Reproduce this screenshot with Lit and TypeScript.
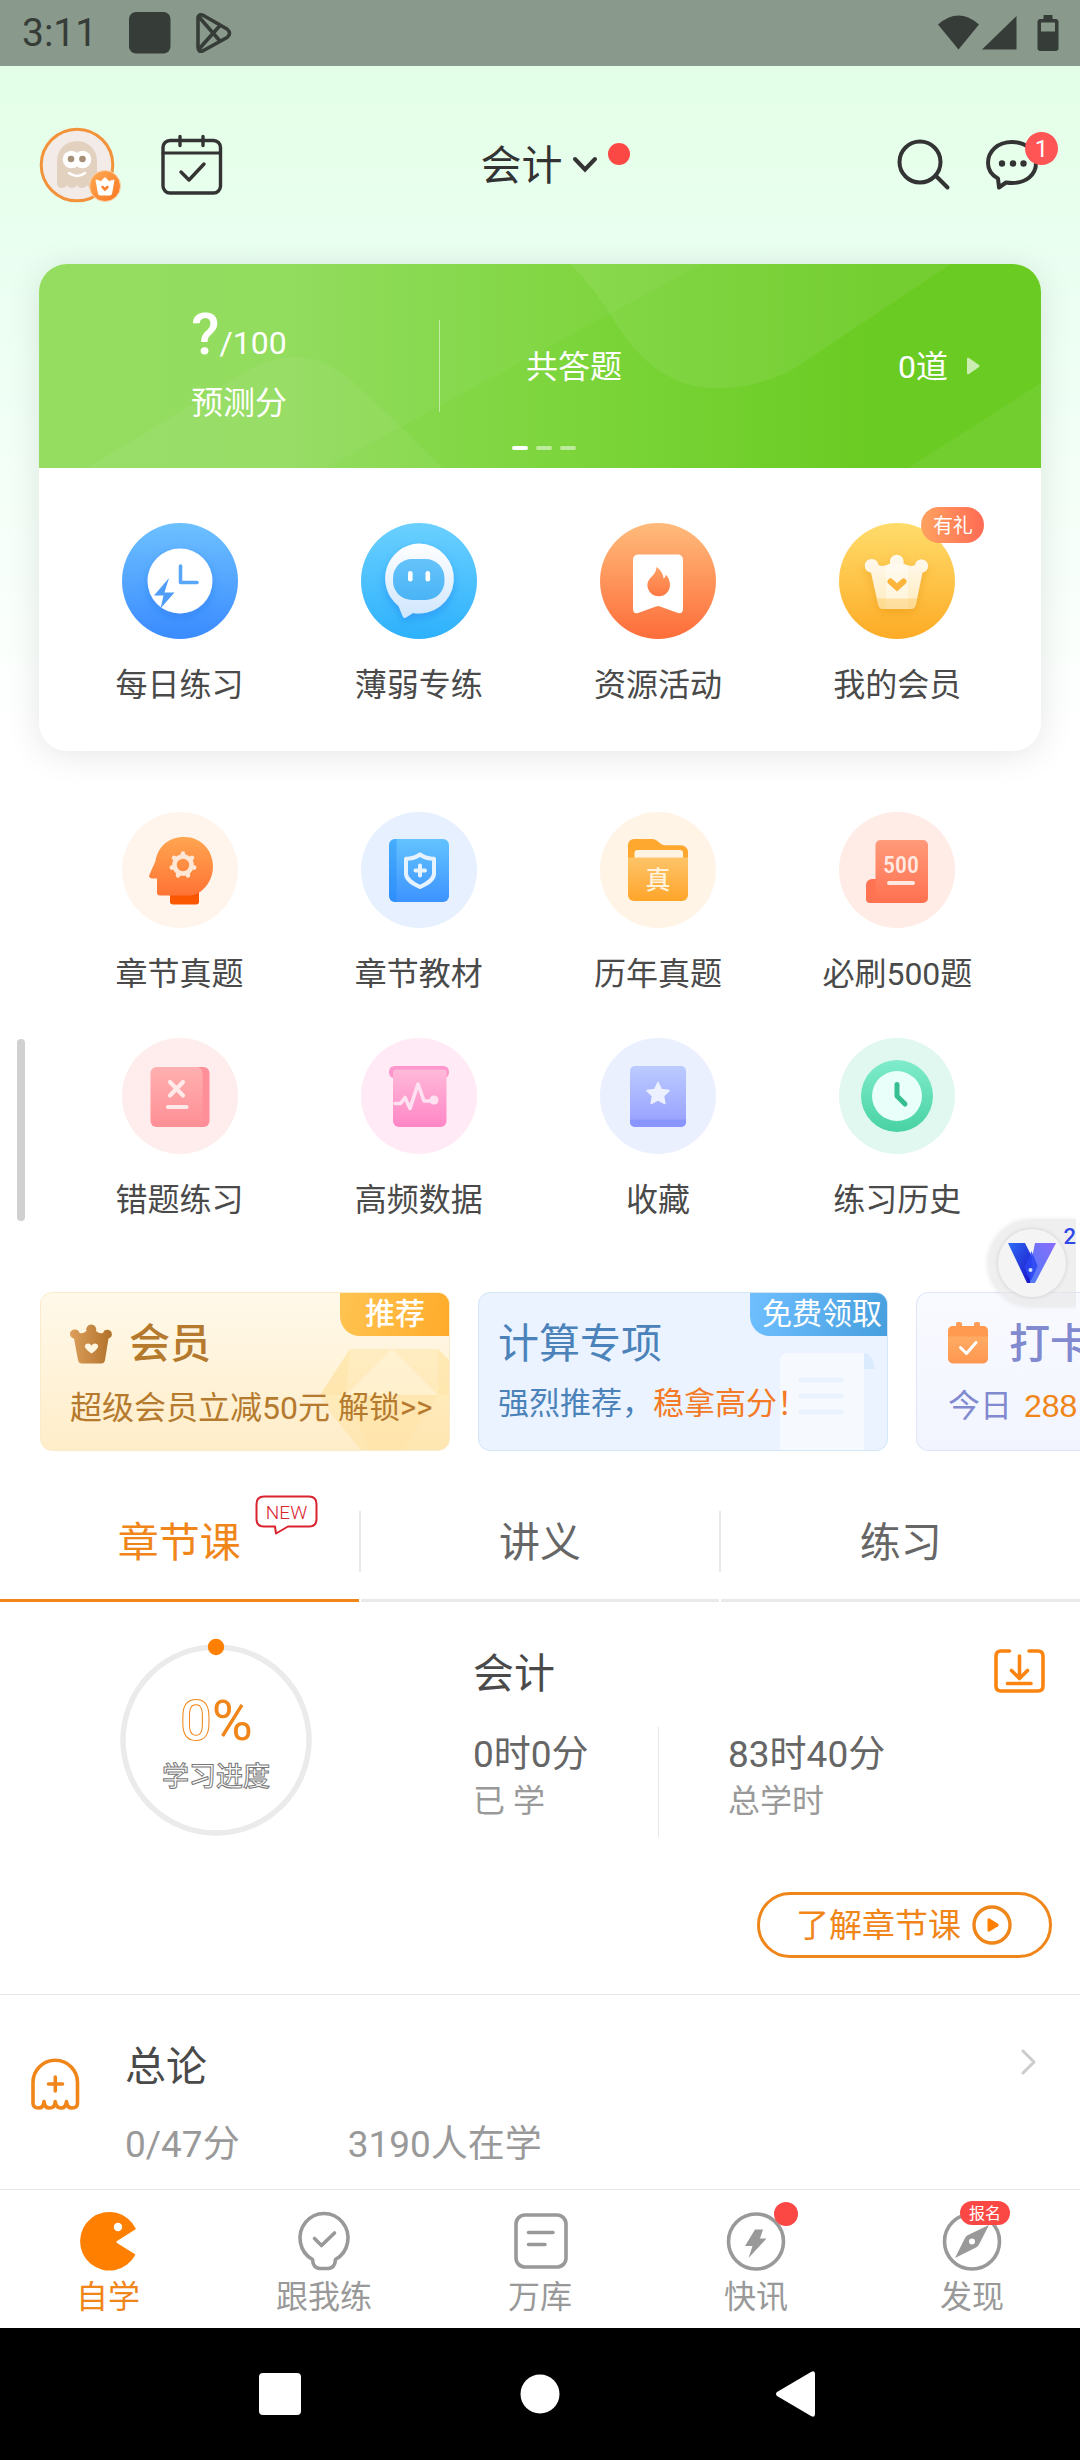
import { LitElement, html, svg, css, TemplateResult } from "lit";
import { customElement } from "lit/decorators.js";

interface Shortcut {
  label: string;
  icon: TemplateResult;
  badge?: string;
}

/* ---------- Featured icons, 116 x 116 ---------- */

const grad = (id: string, from: string, to: string) => svg`
  <linearGradient id=${id} x1="0" y1="0" x2="0" y2="1">
    <stop offset="0" stop-color=${from} /><stop offset="1" stop-color=${to} />
  </linearGradient>`;

const icon = (body: unknown) =>
  html`<svg class="shortcut-icon" viewBox="0 0 116 116" aria-hidden="true">${body}</svg>`;

const dailyIcon = icon(svg`
  <defs>${grad("daily", "#6dc0ff", "#3a8bff")}
    <filter id="soft" x="-30%" y="-30%" width="160%" height="160%">
      <feDropShadow dx="0" dy="4" stdDeviation="4" flood-color="#1a6ce8" flood-opacity=".35" />
    </filter></defs>
  <circle cx="58" cy="58" r="58" fill="url(#daily)" />
  <circle cx="58" cy="58" r="32.500" fill="#fff" filter="url(#soft)" />
  <path d="M58.500 43v16.500H75" fill="none" stroke="#58a6f8" stroke-width="3.600" stroke-linecap="round" stroke-linejoin="round" />
  <path d="M47 55 32 72.500h9.500L38.500 85.500 52.500 69.500H42.500z" fill="#4f9df9" />`);

const weakIcon = icon(svg`
  <defs>${grad("weak", "#6bd0ff", "#2db1fc")}${grad("weakBubble", "#ffffff", "#cfe6fd")}${grad("weakFace", "#66c3fa", "#4ab4f6")}</defs>
  <circle cx="58" cy="58" r="58" fill="url(#weak)" />
  <g filter="url(#soft)">
    <path d="M58 20.500a35 35 0 1 1-6 69.500l-7 4.600q-2.500 1-3.400-1.600L37.500 83A35 35 0 0 1 58 20.500z" fill="url(#weakBubble)" />
  </g>
  <rect x="32" y="36" width="51.500" height="41" rx="19" fill="url(#weakFace)" />
  <rect x="47" y="48" width="4.600" height="10.500" rx="2.300" fill="#fff" />
  <rect x="64.500" y="48" width="4.600" height="10.500" rx="2.300" fill="#fff" />`);

const resourceIcon = icon(svg`
  <defs>${grad("res", "#ffbb7b", "#fd6d3a")}${grad("flame", "#ffa066", "#fd7843")}</defs>
  <circle cx="58" cy="58" r="58" fill="url(#res)" />
  <path d="M38 31.500h40a5 5 0 0 1 5 5V86q0 5-5 4L60 83.500q-2-.8-4 0L38 90q-5 1-5-4V36.500a5 5 0 0 1 5-5z" fill="#fff" />
  <path d="M56.500 44c4.500 3 7 7.500 7 11.500 1.200-.6 2-2 2.300-3.800C69 55 70 58.500 70 62a11.300 11.300 0 0 1-22.600 0c0-8 8.600-8.500 9.100-18z" fill="url(#flame)" />`);

const memberIcon = icon(svg`
  <defs>${grad("mem", "#ffdc6b", "#fdab25")}${grad("crown", "#fffaf0", "#ffebbd")}</defs>
  <circle cx="58" cy="58" r="58" fill="url(#mem)" />
  <g filter="url(#gold)">
    <path d="M33 36a6.600 6.600 0 0 1 6.500 6q5 2.500 11.500-1.500a7 7 0 1 1 13.500 0Q71 44.500 76 42a6.600 6.600 0 1 1 7.500 7.500L77 81q-1 5-5 5H44q-4 0-5-5L32 49.500A6.600 6.600 0 0 1 33 36z" fill="url(#crown)" />
  </g>
  <rect x="47" y="42" width="22" height="44" fill="#fff" opacity=".4" />
  <path d="M37.500 75.500h41L77 81q-1 5-5 5H44q-4 0-5-5z" fill="#fdc75c" opacity=".45" />
  <path d="m51.500 58.500 6.500 6 6.500-6" fill="none" stroke="#fcb53a" stroke-width="6" stroke-linecap="round" stroke-linejoin="miter" />
  <filter id="gold" x="-30%" y="-30%" width="160%" height="160%">
    <feDropShadow dx="0" dy="4" stdDeviation="4" flood-color="#e08a00" flood-opacity=".35" />
  </filter>`);

/* ---------- Soft disc icons, 116 x 116 ---------- */

const headIcon = icon(svg`
  <defs>${grad("head", "#ffa550", "#ff7334")}</defs>
  <circle cx="58" cy="58" r="58" fill="#fff5ed" />
  <rect x="48" y="74" width="29" height="18.500" rx="3" fill="#fb5600" />
  <path d="M62 25c17 0 29 13 29 29.500 0 11-5.500 20-13 25.500-4 3-9 3.500-15 3.500H38q-3 0-3-3V66.500h-5q-4-.5-2.500-4L33.500 49C36 35 46 25 62 25z" fill="url(#head)" />
  <circle cx="61" cy="53" r="8.500" fill="none" stroke="#ffe7d6" stroke-width="4.600" />
  <g stroke="#ffe7d6" stroke-width="4.600" stroke-linecap="round">
    ${[0, 51.4, 102.9, 154.3, 205.7, 257.1, 308.6].map(
      (a) => svg`<path d="M61 42.500v-1" transform="rotate(${a} 61 53)" />`)}
  </g>`);

const textbookIcon = icon(svg`
  <defs>${grad("book", "#62c3ff", "#3d93ff")}</defs>
  <circle cx="58" cy="58" r="58" fill="#e6f0ff" />
  <rect x="28" y="27" width="60" height="63" rx="6" fill="url(#book)" />
  <path d="M35.500 27H34a6 6 0 0 0-6 6v51a6 6 0 0 0 6 6h1.500z" fill="#1585f5" opacity=".35" />
  <path d="M59 42.500c4 2.800 8.500 4.200 14 4.300V61.500c0 6-5.500 9.500-14 13.500-8.500-4-14-7.500-14-13.500V46.800c5.500-.1 10-1.500 14-4.300z" fill="none" stroke="#e6f3ff" stroke-width="4" stroke-linejoin="round" />
  <path d="M59 53.500v10M54.500 58.500h9.500" stroke="#e6f3ff" stroke-width="4" stroke-linecap="round" />`);

const pastIcon = icon(svg`
  <defs>${grad("folder", "#fdc469", "#ffa52a")}</defs>
  <circle cx="58" cy="58" r="58" fill="#fff4e6" />
  <path d="M34 27h18q3 0 5 1.700l4.500 3.600q1.500 1 3.500 1h16a7 7 0 0 1 7 7V50H28V33a6 6 0 0 1 6-6z" fill="#ffa82f" />
  <rect x="34.500" y="38" width="48.500" height="14" rx="3" fill="#fff4e2" />
  <path d="M28 45.500h60V83a6 6 0 0 1-6 6H34a6 6 0 0 1-6-6z" fill="url(#folder)" />
  <text class="glyph-zhen" x="58" y="77" text-anchor="middle">真</text>`);

const mustIcon = icon(svg`
  <defs>${grad("must", "#ff9a7a", "#ff7150")}</defs>
  <circle cx="58" cy="58" r="58" fill="#ffece6" />
  <path d="M27 73a6 6 0 0 1 6-6h8v24H31a4 4 0 0 1-4-4z" fill="#ff7353" />
  <path d="M41.500 28H84a5 5 0 0 1 5 5v53a5 5 0 0 1-5 5H36.500V33a5 5 0 0 1 5-5z" fill="url(#must)" />
  <text class="glyph-500" x="62" y="61" text-anchor="middle">500</text>
  <path d="M50 71h24" stroke="#ffe9e2" stroke-width="4" stroke-linecap="round" />`);

const wrongIcon = icon(svg`
  <defs>${grad("wrong", "#ffb0b0", "#fe8f96")}</defs>
  <circle cx="58" cy="58" r="58" fill="#ffecec" />
  <rect x="40" y="29" width="47.500" height="60" rx="6" fill="#fe8f98" />
  <rect x="28.500" y="29" width="52" height="60" rx="6" fill="url(#wrong)" />
  <path d="m48 44 13 13.500M61 44 48 57.500M46 69h18.500" stroke="#ffe9e9" stroke-width="4.200" stroke-linecap="round" />`);

const dataIcon = icon(svg`
  <defs>${grad("data", "#ffb9d8", "#ff86c6")}</defs>
  <circle cx="58" cy="58" r="58" fill="#ffeaf5" />
  <path d="M34 28h48q6 0 6 6 0 5-4 6H32q-4-1-4-6 0-6 6-6z" fill="#ff95cd" />
  <path d="M35 31.500h47.500q3 0 3 3V83a6 6 0 0 1-6 6H38a6 6 0 0 1-6-6V34.500q0-3 3-3z" fill="url(#data)" />
  <path d="M34 65.500h5.500l4.500-6 5 11L57 46l6 17h9.500" fill="none" stroke="#ffe2f1" stroke-width="3.600" stroke-linecap="round" stroke-linejoin="round" />
  <circle cx="73" cy="62" r="4.500" fill="#ffe2f1" />`);

const favouriteIcon = icon(svg`
  <defs>${grad("fav", "#bccbff", "#969fff")}</defs>
  <circle cx="58" cy="58" r="58" fill="#ebf0ff" />
  <rect x="30" y="28" width="56" height="61" rx="5" fill="url(#fav)" />
  <path d="M30 81.500h56V84a5 5 0 0 1-5 5H35a5 5 0 0 1-5-5z" fill="#8a95ff" />
  <path d="m58 44.500 3.400 7 7.600 1.100-5.500 5.300 1.300 7.600-6.800-3.600-6.800 3.600 1.300-7.600-5.500-5.300 7.600-1.100z" fill="#ecf0ff" stroke="#ecf0ff" stroke-width="1.500" stroke-linejoin="round" />`);

const historyIcon = icon(svg`
  <defs>${grad("hist", "#80eccb", "#48d2a3")}</defs>
  <circle cx="58" cy="58" r="58" fill="#e0f8f0" />
  <circle cx="58" cy="58" r="36" fill="url(#hist)" />
  <circle cx="58" cy="58" r="25" fill="#e9fff9" />
  <path d="M58 46.500V58l8 8" fill="none" stroke="#36bd90" stroke-width="5" stroke-linecap="round" stroke-linejoin="round" />`);

const FEATURED: Shortcut[] = [
  { label: "每日练习", icon: dailyIcon },
  { label: "薄弱专练", icon: weakIcon },
  { label: "资源活动", icon: resourceIcon },
  { label: "我的会员", icon: memberIcon, badge: "有礼" },
];

const SHORTCUTS: Shortcut[] = [
  { label: "章节真题", icon: headIcon },
  { label: "章节教材", icon: textbookIcon },
  { label: "历年真题", icon: pastIcon },
  { label: "必刷500题", icon: mustIcon },
  { label: "错题练习", icon: wrongIcon },
  { label: "高频数据", icon: dataIcon },
  { label: "收藏", icon: favouriteIcon },
  { label: "练习历史", icon: historyIcon },
];

/* ---------- Bottom navigation icons, 60 x 60 ---------- */

const navSvg = (body: unknown) =>
  html`<svg class="nav-icon" viewBox="0 0 60 60" aria-hidden="true">${body}</svg>`;

const NAV = [
  {
    label: "自学",
    active: true,
    icon: navSvg(svg`
      <path d="M58 18A29.300 29.300 0 1 0 57.500 43.500L39 32q-1.500-1 0-2z" fill="#ff8000" />
      <circle cx="40" cy="16" r="4.200" fill="#fff" />`),
  },
  {
    label: "跟我练",
    icon: navSvg(svg`
      <g fill="none" stroke="#999" stroke-width="3.600" stroke-linecap="round" stroke-linejoin="round">
        <path d="M18.500 48.500A24 24.500 0 1 1 41.500 48.500Q41 57.500 33.500 57.500h-7Q19 57.500 18.500 48.500z" />
        <path d="m20.500 27.500 7 7L40.500 22" />
      </g>`),
  },
  {
    label: "万库",
    icon: navSvg(svg`
      <g fill="none" stroke="#999" stroke-width="3.600" stroke-linecap="round">
        <rect x="6" y="4" width="50" height="52" rx="9" />
        <path d="M18.500 21.500H43M18.500 33.500H35" />
      </g>`),
  },
  {
    label: "快讯",
    dot: true,
    icon: navSvg(svg`
      <circle cx="30" cy="30.500" r="27.500" fill="none" stroke="#999" stroke-width="3.600" />
      <path d="M29 18.500h8l-3 9h6.500L22.500 47l4-12H19z" fill="#999" />`),
  },
  {
    label: "发现",
    tag: "报名",
    icon: navSvg(svg`
      <circle cx="30" cy="30.500" r="27.500" fill="none" stroke="#999" stroke-width="3.600" />
      <path d="M47 14 37 33.500q-1 2-3 3L13 47l10-20q1-2 3-3z" fill="#999" />
      <circle cx="30" cy="30.500" r="3" fill="#fff" />`),
  },
];

@customElement("app-root")
export class AppRoot extends LitElement {
  static styles = css`
    :host {
      display: block;
      font-family: Roboto, "Noto Sans CJK SC", sans-serif;
      color: #4a4a4a;
      --orange: #f08519;
      --red: #fb4845;
    }
    * {
      box-sizing: border-box;
    }
    svg {
      display: block;
      flex: none;
      overflow: visible;
    }
    button {
      margin: 0;
      padding: 0;
      border: 0;
      background: none;
      font: inherit;
      color: inherit;
      cursor: pointer;
    }
    a {
      color: inherit;
      text-decoration: none;
    }
    h1,
    h2,
    p {
      margin: 0;
      font-weight: 400;
    }
    .page {
      display: flex;
      flex-direction: column;
      min-height: 100vh;
      overflow: hidden;
      background: linear-gradient(#e3ffe6 0, #e4ffe7 90px, #e9fff0 240px, #fff 745px) #fff;
    }
    main {
      flex: 1;
    }

    /* Status bar */
    .status {
      display: flex;
      align-items: center;
      height: 66px;
      padding: 0 22px;
      background: #89998b;
      color: #363c37;
    }
    .clock {
      margin-right: 32px;
      font-size: 39px;
      line-height: 66px;
    }
    .status-play {
      margin-left: 25px;
    }
    .status-right {
      margin-left: auto;
    }

    /* Header */
    .header {
      display: grid;
      grid-template-columns: 1fr auto 1fr;
      align-items: center;
      height: 198px;
      padding: 0 22px 0 40px;
    }
    .header-left,
    .header-right {
      display: flex;
      align-items: center;
      gap: 36px;
    }
    .header-right {
      justify-content: flex-end;
    }
    .subject {
      position: relative;
      display: flex;
      align-items: center;
      gap: 9px;
      margin-right: 20px;
      padding-top: 2px;
      color: #333;
      font-size: 41px;
      line-height: 56px;
    }
    .subject-dot {
      position: absolute;
      top: 7px;
      right: -32px;
      width: 22px;
      height: 22px;
      border-radius: 50%;
      background: var(--red);
    }
    .messages {
      position: relative;
      padding-right: 18px;
    }
    .count {
      position: absolute;
      top: -8px;
      right: 0;
      width: 33px;
      height: 33px;
      border-radius: 50%;
      background: #ff5555;
      color: #fff;
      font-size: 24px;
      line-height: 34px;
      text-align: center;
    }

    /* Score card */
    .card {
      margin: 0 39px;
      border-radius: 28px;
      background: #fff;
      box-shadow: 0 4px 34px rgba(0, 0, 0, 0.1);
      overflow: hidden;
    }
    .score {
      position: relative;
      display: grid;
      grid-template-columns: 400px 1px 1fr;
      align-items: center;
      height: 204px;
      background: linear-gradient(90deg, #90dc5b 0, #8edb58 25%, #7cd53b 53%, #6acb22 84%, #6acb22);
      color: #fff;
      font-size: 32px;
    }
    .score-art {
      position: absolute;
      inset: 0;
      width: 100%;
      height: 100%;
    }
    .predict {
      position: relative;
      display: flex;
      flex-direction: column;
      align-items: center;
      padding-top: 5px;
    }
    .predict-value {
      line-height: 60px;
    }
    .predict-mark {
      font-size: 58px;
      font-weight: 500;
    }
    .predict-label {
      line-height: 60px;
    }
    .rule {
      height: 92px;
      background: rgba(255, 255, 255, 0.5);
    }
    .answered {
      position: relative;
      display: flex;
      align-items: center;
      padding: 2px 61px 0 86px;
      line-height: 44px;
    }
    .answered-count {
      margin: 0 19px 0 auto;
    }
    .pager {
      position: absolute;
      left: 0;
      right: 0;
      bottom: 18px;
      display: flex;
      justify-content: center;
      gap: 8px;
      padding-left: 8px;
    }
    .pager-dot {
      width: 16px;
      height: 4px;
      border-radius: 2px;
      background: rgba(255, 255, 255, 0.5);
    }
    .pager-dot.current {
      background: #fff;
    }

    /* Shortcut grids */
    .grid {
      display: grid;
      grid-template-columns: repeat(4, 1fr);
      row-gap: 44px;
    }
    .grid.featured {
      padding: 55px 24px 46px 21px;
    }
    .grid.plain {
      padding: 61px 63px 72px 60px;
    }
    .shortcut {
      display: flex;
      flex-direction: column;
      align-items: center;
      gap: 26px;
      font-size: 32px;
      line-height: 40px;
    }
    .shortcut-figure {
      position: relative;
    }
    .shortcut-icon {
      width: 116px;
      height: 116px;
    }
    .gift {
      position: absolute;
      top: -16px;
      left: 82px;
      width: 63px;
      height: 36px;
      border-radius: 18px;
      background: linear-gradient(90deg, #ffa25f, #ff6b54);
      color: #fff;
      font-size: 20px;
      line-height: 38px;
      text-align: center;
      white-space: nowrap;
    }
    .glyph-zhen {
      fill: #fff2dc;
      font-size: 25px;
      font-weight: 500;
    }
    .glyph-500 {
      fill: #ffe9e2;
      font-size: 24px;
      font-weight: 500;
      font-family: "Roboto Condensed", Roboto, sans-serif;
    }
    .tools {
      position: relative;
    }
    .scroll-thumb {
      position: absolute;
      top: 288px;
      left: 17px;
      width: 8px;
      height: 182px;
      border-radius: 4px;
      background: #d0d0d0;
    }
    .assistant {
      position: absolute;
      z-index: 1;
      top: 468px;
      right: 4px;
      display: flex;
      align-items: center;
      width: 88px;
      height: 88px;
      padding-left: 10px;
      border-radius: 44px 0 0 44px;
      background: rgba(228, 228, 228, 0.6);
      box-shadow: -1px 0 5px rgba(0, 0, 0, 0.08);
      clip-path: inset(-8px 0 -8px -8px);
    }
    .assistant-disc {
      display: grid;
      place-items: center;
      width: 68px;
      height: 68px;
      border-radius: 50%;
      background: #f4f4f4;
      box-shadow: 0 0 4px rgba(0, 0, 0, 0.14);
    }
    .assistant-count {
      position: absolute;
      top: 5px;
      right: 0;
      color: #2f48e8;
      font-size: 22px;
      font-weight: 500;
      line-height: 25px;
    }

    /* Promotions */
    .promos {
      display: flex;
      gap: 28px;
      padding-left: 40px;
      overflow: hidden;
    }
    .promo {
      position: relative;
      flex: 0 0 410px;
      height: 159px;
      padding: 27px 0 0 29px;
      border: 1px solid #faeccb;
      border-radius: 12px;
      background: linear-gradient(#fff9ea, #ffedc9);
      color: #b57a2d;
      white-space: nowrap;
      overflow: hidden;
    }
    .promo-art {
      position: absolute;
      right: -1px;
      bottom: -1px;
    }
    .promo-title {
      position: relative;
      display: flex;
      align-items: center;
      gap: 16px;
      height: 48px;
      font-size: 41px;
      line-height: 48px;
      font-weight: 500;
    }
    .promo-text {
      position: relative;
      display: flex;
      gap: 8px;
      margin-top: 20px;
      font-size: 32px;
      line-height: 40px;
    }
    .promo-more {
      font-size: 31px;
    }
    .promo-tag {
      position: absolute;
      top: -1px;
      right: -1px;
      min-width: 110px;
      border-radius: 0 12px 0 20px;
      background: linear-gradient(100deg, #ffc451, #ffab2a);
      color: #fff;
      font-size: 30px;
      line-height: 44px;
      font-weight: 500;
      text-align: center;
    }
    .promo.calc {
      padding-left: 19px;
      border-color: #d3e6f8;
      background: #eaf3ff;
      color: #4a82b9;
    }
    .promo.calc .promo-title {
      font-weight: 400;
    }
    .promo.calc .promo-text {
      gap: 0;
      margin-top: 16px;
      font-size: 31px;
    }
    .promo.calc .promo-tag {
      padding: 0 6px 0 12px;
      background: linear-gradient(100deg, #6fbfff, #479fdd);
      font-weight: 400;
    }
    .hot {
      color: #f47a25;
    }
    .promo.checkin {
      border-color: #dfe5f6;
      background: linear-gradient(#f9faff, #f2f5ff);
      color: #8189cf;
    }
    .promo.checkin .promo-title {
      gap: 20px;
    }
    .promo.checkin .promo-text {
      gap: 12px;
      margin-top: 18px;
      padding-left: 2px;
    }
    .checkin-count {
      color: var(--orange);
      font-family: "Liberation Sans", sans-serif;
    }

    /* Tabs */
    .tabs {
      display: flex;
      padding-top: 60px;
    }
    .tab {
      position: relative;
      flex: 1;
      padding: 2px 0 25px;
      border-bottom: 3px solid #e9e9e9;
      color: #666;
      font-size: 41px;
      line-height: 61px;
    }
    .tab.selected {
      border-color: var(--orange);
      color: var(--orange);
    }
    .tab-rule {
      width: 2px;
      height: 61px;
      background: #e9e9e9;
    }
    .new-flag {
      position: absolute;
      top: -16px;
      left: 255px;
    }
    .new-text {
      fill: #d9232e;
      font-size: 19px;
      font-weight: 300;
    }

    /* Course summary */
    .summary {
      display: grid;
      grid-template-columns: 2fr 3fr;
      border-bottom: 1px solid #e8e8e8;
    }
    .ring {
      justify-self: center;
      margin-top: 42px;
    }
    .ring-zero {
      fill: none;
      stroke: var(--orange);
      stroke-width: 1;
      font-size: 56px;
      font-weight: 500;
    }
    .ring-percent {
      fill: var(--orange);
      font-size: 56px;
    }
    .ring-label {
      fill: #fff;
      stroke: #777;
      stroke-width: 1;
      font-size: 27px;
      font-weight: 500;
    }
    .detail {
      display: flex;
      flex-direction: column;
      padding: 47px 28px 36px 41px;
    }
    .detail-head {
      display: flex;
      align-items: center;
      justify-content: space-between;
      height: 44px;
      padding-right: 7px;
    }
    .detail-title {
      padding-top: 5px;
      font-size: 41px;
      line-height: 44px;
    }
    .stats {
      display: flex;
      margin-top: 34px;
    }
    .stat {
      width: 185px;
      padding: 5px 0 13px;
      white-space: nowrap;
    }
    .stat + .stat {
      width: auto;
      padding-left: 69px;
      border-left: 1px solid #e6e6e6;
    }
    .stat-value {
      color: #666;
      font-size: 37px;
      line-height: 46px;
    }
    .stat-label {
      color: #999;
      font-size: 32px;
      line-height: 46px;
    }
    .learn {
      display: flex;
      align-items: center;
      align-self: flex-end;
      gap: 11px;
      height: 66px;
      margin-top: 55px;
      padding: 0 37px 0 36px;
      border: 3px solid var(--orange);
      border-radius: 33px;
      color: var(--orange);
      font-size: 33px;
      line-height: 44px;
    }
    .learn-text {
      padding-top: 2px;
    }

    /* Chapter */
    .chapter {
      display: grid;
      grid-template-columns: 94px 1fr auto;
      align-items: start;
      padding: 46px 44px 21px 31px;
    }
    .chapter-icon {
      margin-top: 17px;
    }
    .chapter-go {
      margin-top: 8px;
    }
    .chapter-title {
      font-size: 41px;
      line-height: 52px;
    }
    .chapter-meta {
      display: flex;
      margin-top: 29px;
      color: #999;
      font-size: 37px;
      line-height: 46px;
      gap: 108px;
    }

    /* Bottom navigation */
    .nav {
      display: grid;
      grid-template-columns: repeat(5, 1fr);
      border-top: 1px solid #e6e6e6;
      background: #fff;
    }
    .nav-item {
      display: flex;
      flex-direction: column;
      align-items: center;
      gap: 6px;
      padding: 21px 0 11px;
      color: #999;
      font-size: 32px;
      line-height: 40px;
    }
    .nav-item.active {
      color: var(--orange);
    }
    .nav-figure {
      position: relative;
    }
    .nav-icon {
      width: 60px;
      height: 60px;
    }
    .nav-dot {
      position: absolute;
      top: -9px;
      left: 48px;
      width: 24px;
      height: 24px;
      border-radius: 50%;
      background: var(--red);
    }
    .nav-tag {
      position: absolute;
      top: -10px;
      left: 18px;
      width: 50px;
      height: 24px;
      border-radius: 12px;
      background: var(--red);
      color: #fff;
      font-size: 16px;
      line-height: 25px;
      text-align: center;
      white-space: nowrap;
    }

    /* System bar */
    .system {
      display: flex;
      justify-content: center;
      height: 132px;
      background: #000;
    }
    .system-key {
      display: grid;
      place-items: center;
      flex: 0 1 260px;
    }
  `;

  private renderShortcut(item: Shortcut) {
    return html`<a class="shortcut" href="#">
      <span class="shortcut-figure">
        ${item.icon}${item.badge ? html`<span class="gift">${item.badge}</span>` : ""}
      </span>
      <span>${item.label}</span>
    </a>`;
  }

  private renderStatus() {
    return html`<div class="status">
      <span class="clock">3:11</span>
      <svg width="42" height="42" viewBox="0 0 42 42"><rect width="41.500" height="41.500" rx="7" fill="#363c37" /></svg>
      <svg class="status-play" width="36" height="40" viewBox="0 0 36 40">
        <g fill="none" stroke="#363c37" stroke-width="3.600" stroke-linejoin="round">
          <path d="M2 6v28q0 6 5.500 3.500L31 24.500q5-4 0-8.500L7.500 2.500Q2 0 2 6z" />
          <path d="m3 4 21 24M3 36 24 12.500" />
        </g>
      </svg>
      <svg class="status-right" width="120" height="37" viewBox="0 0 120 37" fill="#363c37">
        <path d="M0 9.500Q20.500-8.500 41 9.500L20.500 34.500z" />
        <path d="M78.500 1v33.500H44z" />
        <path d="M105.500 0h9v4h3q3 0 3 3v26q0 3-3 3h-15q-3 0-3-3V7q0-3 3-3h3zM103 7.500v9h14v-9z" fill-rule="evenodd" />
      </svg>
    </div>`;
  }

  private renderHeader() {
    return html`<header class="header">
      <div class="header-left">
        <button aria-label="个人中心">
          <svg width="85" height="76" viewBox="0 0 85 76">
            <defs>
              <linearGradient id="badge" x1="0" y1="0" x2="1" y2="1">
                <stop offset="0" stop-color="#ffad57" /><stop offset="1" stop-color="#f9741f" />
              </linearGradient>
            </defs>
            <circle cx="37" cy="38" r="35.800" fill="#f2ebe8" stroke="#f2923a" stroke-width="3" />
            <path d="M17 34a20 20 0 0 1 40 0v22q0 5-5 5-4 0-5-3-1.500 3-5 3-4 0-5-3-1.500 3-5 3-4 0-5-3-1.500 3-5 3-5 0-5-5z" fill="#e3d1c0" />
            <circle cx="31.500" cy="32.500" r="8.800" fill="#fff" /><circle cx="42.500" cy="32.500" r="8.800" fill="#fff" />
            <circle cx="31" cy="32" r="3.300" fill="#a58f77" /><circle cx="42.500" cy="32" r="3.300" fill="#a58f77" />
            <path d="M29 46q8 6 16 0" fill="none" stroke="#fff" stroke-width="2.600" stroke-linecap="round" />
            <circle cx="65" cy="59" r="15.500" fill="url(#badge)" stroke="#fbd3ae" stroke-width="1" />
            <path d="m56 53 5 1.500 4-4 4 4 5-1.500-2.500 14q-.3 1-1.500 1H60q-1.200 0-1.500-1z" fill="#fff" stroke="#fff" stroke-linejoin="round" />
            <path d="m62.500 60 2.500 2.500 2.500-2.500" fill="none" stroke="#f9812f" stroke-width="2.500" stroke-linecap="round" />
          </svg>
        </button>
        <button aria-label="打卡日历">
          <svg width="62" height="60" viewBox="0 0 62 60">
            <g fill="none" stroke="#333" stroke-width="3.400" stroke-linecap="round">
              <rect x="2" y="5.500" width="57.500" height="52.500" rx="7" />
              <path d="M2 18h57.500" stroke-width="3" />
              <path d="M19 1.500v9M42 1.500v9" />
              <path d="m20 37 8 8 15-16" stroke-linejoin="round" />
            </g>
          </svg>
        </button>
      </div>
      <button class="subject">
        会计
        <svg width="26" height="18" viewBox="0 0 26 18">
          <path d="m3 2 10 10.500L23 2" fill="none" stroke="#333" stroke-width="4" stroke-linecap="round" />
        </svg>
        <span class="subject-dot"></span>
      </button>
      <div class="header-right">
        <button aria-label="搜索">
          <svg width="52" height="50" viewBox="0 0 52 50">
            <g fill="none" stroke="#333" stroke-width="4" stroke-linecap="round">
              <circle cx="22" cy="22" r="20.500" /><path d="m38 36 11.500 11.500" />
            </g>
          </svg>
        </button>
        <button class="messages" aria-label="消息">
          <svg width="54" height="50" viewBox="0 0 54 50">
            <path d="M26 2c14 0 24 9 24 21S40 43 26 43q-3 0-6-.5L13 47.500l-1-9C5.500 35 2 30 2 23 2 11 12 2 26 2z" fill="none" stroke="#333" stroke-width="4" stroke-linejoin="round" />
            <g fill="#333"><circle cx="16" cy="23.500" r="3.200" /><circle cx="27" cy="23.500" r="3.200" /><circle cx="37.500" cy="23.500" r="3.200" /></g>
          </svg>
          <span class="count">1</span>
        </button>
      </div>
    </header>`;
  }

  private renderCard() {
    return html`<section class="card">
      <div class="score">
        <svg class="score-art" viewBox="0 0 1002 204" preserveAspectRatio="none" fill="#fff">
          <path d="M48 204 200 112q60-40 112 4 20 18 92 88z" opacity=".05" />
          <path d="M0 0h663L286 204H0z" opacity=".04" />
          <path d="M531 0q25 24 45 58 38 62 94 66 44 3 86-20L912 0z" opacity=".07" />
          <path d="M1002 119v85H869z" opacity=".06" />
        </svg>
        <div class="predict">
          <span class="predict-value"><span class="predict-mark">?</span>/100</span>
          <span class="predict-label">预测分</span>
        </div>
        <span class="rule"></span>
        <div class="answered">
          <span>共答题</span>
          <span class="answered-count">0道</span>
          <svg width="13" height="18" viewBox="0 0 13 18"><path d="M0 1q0-2 2-1l10 7q1.500 1 0 2L2 16q-2 1-2-1z" fill="#fff" opacity=".65" /></svg>
        </div>
        <div class="pager">
          <span class="pager-dot current"></span><span class="pager-dot"></span><span class="pager-dot"></span>
        </div>
      </div>
      <div class="grid featured">${FEATURED.map((s) => this.renderShortcut(s))}</div>
    </section>`;
  }

  private renderTools() {
    return html`<section class="tools">
      <div class="grid plain">${SHORTCUTS.map((s) => this.renderShortcut(s))}</div>
      <span class="scroll-thumb"></span>
      <button class="assistant" aria-label="助手">
        <span class="assistant-disc">
          <svg width="48" height="40" viewBox="0 0 48 40">
            <defs>
              <linearGradient id="vLeft" x1="0" y1="0" x2="1" y2="1">
                <stop offset="0" stop-color="#2f6df5" /><stop offset="1" stop-color="#1c12c9" />
              </linearGradient>
              <linearGradient id="vRight" x1="1" y1="0" x2="0" y2="1">
                <stop offset="0" stop-color="#8a6dfb" /><stop offset="1" stop-color="#4d7cf8" />
              </linearGradient>
            </defs>
            <path d="M27 0h21L27 40h-8z" fill="url(#vRight)" />
            <path d="M0 0h17l7 14-2 26h-3z" fill="url(#vLeft)" />
            <path d="M23.500 8l6 15-6 14q-3 0-7-13z" fill="#2a45f2" opacity=".85" />
            <circle cx="22.500" cy="27" r="2" fill="#cfe0ff" />
          </svg>
        </span>
        <span class="assistant-count">2</span>
      </button>
    </section>`;
  }

  private renderPromos() {
    return html`<section class="promos">
      <a class="promo" href="#">
        <svg class="promo-art" width="130" height="102" viewBox="0 0 130 102">
          <g fill="#ffd978">
            <path d="M30 0h88l12 12v90H42L12 66 0 46z" opacity=".28" />
            <path d="M30 0 0 46h26z" opacity=".18" />
            <path d="m72 0 46 46H26z" fill="#fff7e2" opacity=".5" />
            <path d="M26 46h92l-36 56H50z" opacity=".12" />
            <path d="M118 0v46h12V12z" opacity=".16" />
          </g>
        </svg>
        <div class="promo-title">
          <svg width="43" height="41" viewBox="0 0 43 41">
            <defs>
              <linearGradient id="bronze" x1="0" y1="0" x2="1" y2="0">
                <stop offset="0" stop-color="#dc9f5b" /><stop offset="1" stop-color="#b0712a" />
              </linearGradient>
            </defs>
            <path d="M5 5.500a4.500 4.500 0 0 1 4.500 3.500q3.500 1 7-2a5 5 0 1 1 9.500 0q3.500 3 7 2a4.500 4.500 0 1 1 5.500 5.500L35 36q-.6 3.500-4 3.500H12q-3.400 0-4-3.500L4 14.500a4.500 4.500 0 0 1 1-9z" fill="url(#bronze)" />
            <path d="M21.500 29.500q-9-6-6-9 3.500-2.500 6 1 2.500-3.500 6-1 3 3-6 9z" fill="#fff6e2" />
          </svg>
          会员
        </div>
        <div class="promo-text"><span>超级会员立减50元</span><span class="promo-more">解锁&gt;&gt;</span></div>
        <span class="promo-tag">推荐</span>
      </a>
      <a class="promo calc" href="#">
        <svg class="promo-art" width="108" height="98" viewBox="0 0 108 98">
          <path d="M84 0q8 0 11 16H84z" fill="#d9ebfd" />
          <path d="M8 0h76v98H0V8q0-8 8-8z" fill="#f6faff" />
          <path d="M21 27h40M21 43h40M21 59h40" stroke="#e9f2fd" stroke-width="5" stroke-linecap="round" />
        </svg>
        <div class="promo-title">计算专项</div>
        <div class="promo-text"><span>强烈推荐，</span><span class="hot">稳拿高分！</span></div>
        <span class="promo-tag">免费领取</span>
      </a>
      <a class="promo checkin" href="#">
        <div class="promo-title">
          <svg width="43" height="42" viewBox="0 0 43 42">
            <defs>${grad("cal", "#ffb36b", "#ff9750")}</defs>
            <g transform="translate(2 -1)">
              <rect x="8" y="0" width="6" height="9" rx="2" fill="#ff9d58" /><rect x="26" y="0" width="6" height="9" rx="2" fill="#ff9d58" />
              <rect y="4" width="40" height="37.500" rx="5" fill="url(#cal)" />
              <path d="M5 4h30a5 5 0 0 1 5 5v5.500H0V9a5 5 0 0 1 5-5z" fill="#ff9a50" />
              <path d="m12.500 25.500 6 6 9.500-11" fill="none" stroke="#fff" stroke-width="3" stroke-linecap="round" stroke-linejoin="round" />
            </g>
          </svg>
          打卡
        </div>
        <div class="promo-text"><span>今日</span><span class="checkin-count">288</span></div>
      </a>
    </section>`;
  }

  private renderCourse() {
    return html`<div class="tabs" role="tablist">
        <button class="tab selected" role="tab" aria-selected="true">
          章节课
          <svg class="new-flag" width="63" height="40" viewBox="0 0 63 40">
            <path d="M9 1.500h45q7.500 0 7.500 7.500v15q0 7.500-7.500 7.500H33L21 38.500l-1-7H9Q1.500 31.500 1.500 24V9Q1.500 1.500 9 1.500z" fill="#fff" stroke="#d9232e" stroke-width="2" stroke-linejoin="round" />
            <text class="new-text" x="31.500" y="23.500" text-anchor="middle">NEW</text>
          </svg>
        </button>
        <span class="tab-rule"></span>
        <button class="tab" role="tab" aria-selected="false">讲义</button>
        <span class="tab-rule"></span>
        <button class="tab" role="tab" aria-selected="false">练习</button>
      </div>
      <section class="summary">
        <svg class="ring" width="192" height="192" viewBox="0 0 192 192">
          <circle cx="96" cy="96" r="93" fill="none" stroke="#ebebeb" stroke-width="5.500" />
          <circle cx="96" cy="3" r="8.200" fill="#ff8000" />
          <text x="60" y="96"><tspan class="ring-zero">0</tspan><tspan class="ring-percent">%</tspan></text>
          <text class="ring-label" x="96" y="142" text-anchor="middle">学习进度</text>
        </svg>
        <div class="detail">
          <div class="detail-head">
            <h2 class="detail-title">会计</h2>
            <button aria-label="下载">
              <svg width="51" height="44" viewBox="0 0 51 44">
                <g fill="none" stroke="#fb8410" stroke-width="3.600" stroke-linecap="round" stroke-linejoin="round">
                  <path d="M15.500 2H7Q2 2 2 7v30q0 5 5 5h37q5 0 5-5V7q0-5-5-5h-9" />
                  <path d="M25.500 7v22M17.500 21.500l8 8 8-8M13.500 34.500H37" />
                </g>
              </svg>
            </button>
          </div>
          <div class="stats">
            <div class="stat"><p class="stat-value">0时0分</p><p class="stat-label">已 学</p></div>
            <div class="stat"><p class="stat-value">83时40分</p><p class="stat-label">总学时</p></div>
          </div>
          <button class="learn">
            <span class="learn-text">了解章节课</span>
            <svg width="40" height="40" viewBox="0 0 40 40">
              <circle cx="20" cy="20" r="18" fill="none" stroke="#f08519" stroke-width="3.400" />
              <path d="M15.500 15q0-2.500 2.500-1.200l8 5q1.500 1.200 0 2.400l-8 5q-2.500 1.300-2.500-1.200z" fill="#ff8000" />
            </svg>
          </button>
        </div>
      </section>
      <a class="chapter" href="#">
        <svg class="chapter-icon" width="49" height="52" viewBox="0 0 49 52">
          <g fill="none" stroke="#f08519" stroke-width="3.600" stroke-linecap="round" stroke-linejoin="round">
            <path d="M2 24.500a22 22 0 0 1 44.500 0V45q0 5-5.500 5-5 0-5.500-6.500Q35 50 30 50t-5.800-6.500Q24 50 18.500 50 13.500 50 13 43.500 12.500 50 7.500 50 2 50 2 45z" />
            <path d="M24.300 19v14M17.500 26h14" />
          </g>
        </svg>
        <div>
          <h2 class="chapter-title">总论</h2>
          <p class="chapter-meta"><span>0/47分</span><span>3190人在学</span></p>
        </div>
        <svg class="chapter-go" width="15" height="26" viewBox="0 0 15 26">
          <path d="m2 2 11 11L2 24" fill="none" stroke="#ccc" stroke-width="3" stroke-linecap="round" stroke-linejoin="round" />
        </svg>
      </a>`;
  }

  private renderNav() {
    return html`<nav class="nav">
        ${NAV.map(
          (n) => html`<a class="nav-item ${n.active ? "active" : ""}" href="#">
            <span class="nav-figure">
              ${n.icon}${n.dot ? html`<span class="nav-dot"></span>` : ""}${n.tag
                ? html`<span class="nav-tag">${n.tag}</span>`
                : ""}
            </span>
            <span>${n.label}</span>
          </a>`
        )}
      </nav>
      <div class="system">
        <button class="system-key" aria-label="最近任务">
          <svg width="42" height="42" viewBox="0 0 42 42"><rect width="42" height="42" rx="4" fill="#fff" /></svg>
        </button>
        <button class="system-key" aria-label="主屏幕">
          <svg width="40" height="40" viewBox="0 0 40 40"><circle cx="20" cy="20" r="19.500" fill="#fff" /></svg>
        </button>
        <button class="system-key" aria-label="返回">
          <svg width="48" height="46" viewBox="0 0 48 46"><path d="M1 21 35 1q4-2 4 2v40q0 4-4 2L1 25q-2-2 0-4z" fill="#fff" /></svg>
        </button>
      </div>`;
  }

  render() {
    return html`<div class="page">
      ${this.renderStatus()}
      <main>
        ${this.renderHeader()} ${this.renderCard()} ${this.renderTools()} ${this.renderPromos()}
        ${this.renderCourse()}
      </main>
      ${this.renderNav()}
    </div>`;
  }
}
